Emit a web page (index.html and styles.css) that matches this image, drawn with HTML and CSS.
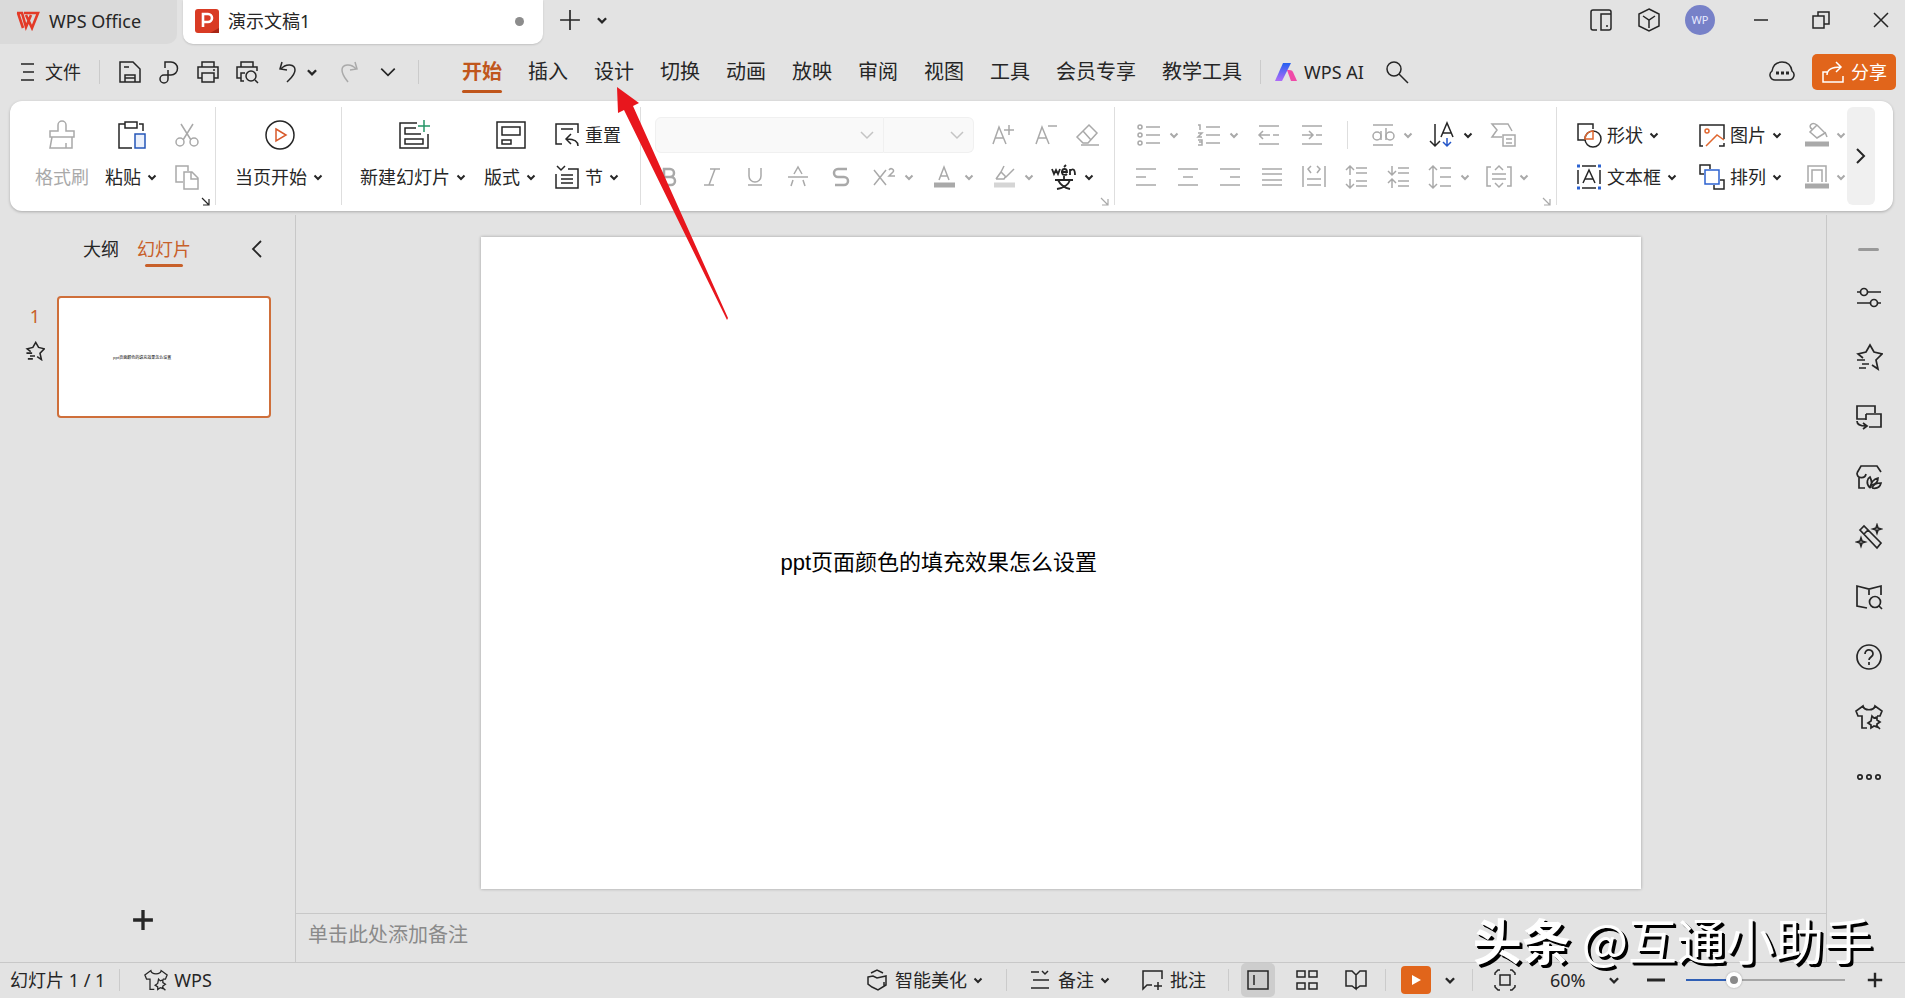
FILE: index.html
```html
<!DOCTYPE html>
<html lang="zh-CN">
<head>
	<meta charset="UTF-8">
	<title>演示文稿1 - WPS Office</title>
	<link rel="stylesheet" href="styles.css">
</head>
<body>
	<!-- 图标 -->
	<svg class="sprite" aria-hidden="true">
		<symbol id="down" viewBox="0 0 12 12"><path d="M2.5 4.5 6 8l3.500-3.500" stroke-width="2"/></symbol>
		<symbol id="down-thin" viewBox="0 0 16 16"><path d="M2 5l6 6 6-6"/></symbol>
		<symbol id="corner" viewBox="0 0 10 10"><path d="M1 1l7 7M8 2v6H2" stroke-width="1.2"/></symbol>
		<symbol id="plus" viewBox="0 0 20 20"><path d="M10 1v18M1 10h18"/></symbol>
		<symbol id="star" viewBox="0 0 28 28"><path d="M8 15l-5-4 8-2 4-7 4 7 8 2-6 6 2 9-6-4M2 17h8M7 21h7M4 25h7"/></symbol>
		<symbol id="shirt" viewBox="0 0 28 28"><path d="M12 25H7V13H3L1 8l7-5c1 5 11 5 12 0l7 5-2 5h-3M17 13l2 2 3-1v3l3 2-3 2v3l-3-1-3 2v-3l-3-2 3-2zM21 22l4 4"/></symbol>
	</svg>

	<header id="titlebar">
		<a class="home" href="#">
			<svg width="24" height="20" viewBox="0 0 24 20"><path d="M1 2h5l4 14 5-12M8 2h14l-6 15-6-13M2 2l5 15" stroke="#e33a27" stroke-width="2.6"/></svg>
			WPS Office
		</a>
		<div class="doc">
			<svg width="24" height="24" viewBox="0 0 24 24"><rect width="24" height="24" rx="3" fill="#d93b24" stroke="none"/><path d="M15 24l9-5v5z" fill="#a82515" stroke="none"/><path d="M8 18V5h5a4 4 0 0 1 0 8H8" stroke="#fff" stroke-width="2.6"/></svg>
			<span>演示文稿1</span>
			<i class="dot"></i>
		</div>
		<button class="new-tab" aria-label="新建"><svg width="22" height="22"><use href="#plus"/></svg></button>
		<button aria-label="标签列表"><svg width="14" height="14"><use href="#down"/></svg></button>
		<div class="window">
			<button aria-label="侧栏"><svg width="24" height="24" viewBox="0 0 24 24"><path d="M8 22H4a2 2 0 0 1-2-2V4a2 2 0 0 1 2-2h16a2 2 0 0 1 2 2v16a2 2 0 0 1-2 2h-8V6h10M17 18h2"/></svg></button>
			<button aria-label="应用"><svg width="24" height="24" viewBox="0 0 24 24"><path d="M12 1l10 5v12l-10 5-10-5V6zM6 8l6 4 6-4M12 12v8"/></svg></button>
			<span class="avatar">WP</span>
			<button class="wide" aria-label="最小化"><svg width="18" height="18" viewBox="0 0 18 18"><path d="M2 9h14"/></svg></button>
			<button class="wide" aria-label="还原"><svg width="20" height="20" viewBox="0 0 20 20"><path d="M2 6h11v12H2zM7 6V2h11v12h-5"/></svg></button>
			<button class="wide" aria-label="关闭"><svg width="18" height="18" viewBox="0 0 18 18"><path d="M2 2l14 14M16 2 2 16"/></svg></button>
		</div>
	</header>

	<nav id="menu">
		<button class="file"><svg width="15" height="20" viewBox="0 0 15 20"><path d="M1 2h13M3 10h11M1 18h13"/></svg>文件</button>
		<div class="quick">
			<button aria-label="保存"><svg width="24" height="24" viewBox="0 0 24 24"><path d="M2 2h13l7 7v13H2zM7 22v-7h10v7M7 18h10M6 7h5"/></svg></button>
			<button aria-label="输出为PDF"><svg width="24" height="24" viewBox="0 0 24 24"><path d="M8 8V2h6a6 6 0 0 1 0 13H7a4 4 0 1 0 4 4v-9"/></svg></button>
			<button aria-label="打印"><svg width="24" height="24" viewBox="0 0 24 24"><path d="M6 7V2h12v5M6 18H2V7h20v11h-4M6 13h12v9H6zM17 10h2"/></svg></button>
			<button aria-label="打印预览"><svg width="24" height="24" viewBox="0 0 24 24"><path d="M6 7V2h12v5M6 18H2V7h20v4M9 21H6v-8h4M20 20l3 3"/><circle cx="16" cy="16" r="5"/></svg></button>
			<button class="undo" aria-label="撤销"><svg width="20" height="22" viewBox="0 0 20 22"><path d="M4 1 2 8l7 1M3 8c5-6 14-5 14 1 0 5-4 8-8 12"/></svg><svg width="14" height="14"><use href="#down"/></svg></button>
			<button class="redo" aria-label="恢复" disabled><svg width="20" height="22" viewBox="0 0 20 22"><path d="M16 1l2 7-7 1M17 8C12 2 3 3 3 9c0 5 3 8 6 12"/></svg></button>
			<button aria-label="更多"><svg width="18" height="18"><use href="#down-thin"/></svg></button>
		</div>
		<div class="tabs">
			<a class="on" href="#">开始</a>
			<a href="#">插入</a>
			<a href="#">设计</a>
			<a href="#">切换</a>
			<a href="#">动画</a>
			<a href="#">放映</a>
			<a href="#">审阅</a>
			<a href="#">视图</a>
			<a href="#">工具</a>
			<a href="#">会员专享</a>
			<a href="#">教学工具</a>
		</div>
		<button class="ai">
			<svg width="24" height="20" viewBox="0 0 24 20"><defs><linearGradient id="g1" x2="0" y2="1"><stop stop-color="#2460f0"/><stop offset="1" stop-color="#b06cf8"/></linearGradient></defs><path d="M9 1h8L8 19H1z" fill="url(#g1)" stroke="none"/><path d="M13 8c3 0 5 0 6 2l4 9h-6z" fill="#f04aa8" stroke="none"/></svg>
			WPS AI
		</button>
		<button aria-label="搜索"><svg width="24" height="24" viewBox="0 0 24 24"><circle cx="9" cy="9" r="7"/><path d="M14 14l9 9"/></svg></button>
		<button class="cloud" aria-label="云"><svg width="26" height="24" viewBox="0 0 26 24"><path d="M6 20a5 5 0 0 1-3-9C4 5 8 2 13 2s9 3 10 9a5 5 0 0 1-3 9z"/><path d="M7 13h3M12 13h3M17 13h3" stroke-width="3"/></svg></button>
		<button class="share"><svg width="24" height="24" viewBox="0 0 24 24"><path d="M6 12H2v10h20v-6M6 15C6 9 11 7 20 7M15 2l5 5-5 5"/></svg>分享</button>
	</nav>

	<section id="ribbon">
		<div class="group clip">
			<button class="big off"><svg width="28" height="30" viewBox="0 0 28 30"><path d="M2 17v-6h8V5a4 4 0 0 1 8 0v6h8v6zM4 17 2 28h22V17M18 28v-5"/></svg><span>格式刷</span></button>
			<button class="big"><svg width="30" height="30" viewBox="0 0 30 30"><path d="M8 4H2v24h13M22 4h4v7M8 2h12v6H8z"/><path d="M18 14h10v14H18z" stroke="#2456b8" fill="#eaf0fc"/></svg><span>粘贴<svg class="dn"><use href="#down"/></svg></span></button>
			<div class="stack off">
				<button aria-label="剪切"><svg width="26" height="26" viewBox="0 0 26 26"><path d="M7 2l10 16M19 2 9 18"/><circle cx="6" cy="20" r="4"/><circle cx="20" cy="20" r="4"/></svg></button>
				<button aria-label="复制"><svg width="26" height="26" viewBox="0 0 26 26"><path d="M9 18H2V2h12v5M10 8h8l6 6v11H10zM17 8v7h7"/></svg></button>
			</div>
			<svg class="corner"><use href="#corner"/></svg>
		</div>
		<div class="group play">
			<button class="big"><svg width="32" height="32" viewBox="0 0 32 32"><circle cx="16" cy="16" r="14"/><path d="M12 10l10 6-10 6z" stroke="#d8592a"/></svg><span>当页开始<svg class="dn"><use href="#down"/></svg></span></button>
		</div>
		<div class="group slides">
			<button class="big"><svg width="32" height="32" viewBox="0 0 32 32"><path d="M19 4H2v25h28V15M18 9H7v6h16M7 20h18v5H7z"/><path d="M26 1v12M20 7h12" stroke="#259567"/></svg><span>新建幻灯片<svg class="dn"><use href="#down"/></svg></span></button>
			<button class="big"><svg width="32" height="32" viewBox="0 0 32 32"><path d="M2 3h28v26H2zM7 8h18v8H7zM7 21h9v4H7z"/></svg><span>版式<svg class="dn"><use href="#down"/></svg></span></button>
			<div class="stack">
				<button class="item"><svg width="26" height="26" viewBox="0 0 26 26"><path d="M8 22H2V2h22v9M7 7h12M24 24c0-5-5-7-11-7M17 12l-5 5 5 5"/></svg>重置</button>
				<button class="item"><svg width="26" height="26" viewBox="0 0 26 26"><path d="M14 5h10v19H2V10M3 2l4 4 4-4M7 11h12M7 15h12M7 19h12"/></svg>节<svg class="dn"><use href="#down"/></svg></button>
			</div>
		</div>
		<div class="group font">
			<div class="row off">
				<div class="combos">
					<label class="combo name"><select aria-label="字体" disabled><option></option></select><svg width="16" height="16"><use href="#down-thin"/></svg></label>
					<label class="combo size"><select aria-label="字号" disabled><option></option></select><svg width="16" height="16"><use href="#down-thin"/></svg></label>
				</div>
				<button aria-label="增大字号"><svg width="28" height="28" viewBox="0 0 28 28"><path d="M4 23l6-17 7 17M6 17h9M20 4v10M15 9h10"/></svg></button>
				<button aria-label="减小字号"><svg width="28" height="28" viewBox="0 0 28 28"><path d="M4 23l6-17 7 17M6 17h9M16 5h9"/></svg></button>
				<button aria-label="清除格式"><svg width="28" height="28" viewBox="0 0 28 28"><path d="M14 4l8 8-9 10H8l-6-6zM8 10l8 9M6 24h18"/></svg></button>
			</div>
			<div class="row off">
				<button aria-label="加粗"><svg width="28" height="28" viewBox="0 0 28 28"><path d="M9 6h6a4 4 0 0 1 0 8H9zM9 14h7a4 4 0 0 1 0 8H9z" stroke-width="2.5"/></svg></button>
				<button aria-label="倾斜"><svg width="28" height="28" viewBox="0 0 28 28"><path d="M12 6h10M6 22h10M17 6l-6 16"/></svg></button>
				<button aria-label="下划线"><svg width="28" height="28" viewBox="0 0 28 28"><path d="M8 5v8a6 6 0 0 0 12 0V5M7 22h14"/></svg></button>
				<button aria-label="删除线"><svg width="28" height="28" viewBox="0 0 28 28"><path d="M4 14h20M10 11l4-7 4 7M9 17l-2 6M19 17l2 6"/></svg></button>
				<button aria-label="阴影"><svg width="28" height="28" viewBox="0 0 28 28"><path d="M20 6h-9a4 4 0 0 0 0 8h6a4 4 0 0 1 0 8H8" stroke-width="2.5"/></svg></button>
				<button aria-label="上标"><svg width="28" height="28" viewBox="0 0 28 28"><path d="M4 7l12 15M16 7 4 22M19 7c2-3 6 0 4 2l-4 4h6"/></svg><svg class="dn"><use href="#down"/></svg></button>
				<button aria-label="字体颜色"><svg width="28" height="28" viewBox="0 0 28 28"><path d="M9 17l5-13 5 13M11 13h6"/><path d="M4 22h21" stroke-width="5"/></svg><svg class="dn"><use href="#down"/></svg></button>
				<button aria-label="突出显示"><svg width="28" height="28" viewBox="0 0 28 28"><path d="M6 16l5-7 5 5 8-8M11 9l3-6M6 16h8l2-3"/><path d="M4 22h21" stroke="#d5d5d5" stroke-width="5"/></svg><svg class="dn"><use href="#down"/></svg></button>
				<button class="wen" aria-label="拼音指南"><svg width="28" height="28" viewBox="0 0 28 28"><path d="M2 6l2 5 2-4 2 4 2-5M11 9h6c0-4-5-4-5 0s4 3 5 2M14 4l2-2M20 12V6M20 8c3-3 5-2 5 4M14 13v4M5 17h18M8 17c3 6 7 8 12 9M20 17c-2 6-7 8-13 9" stroke-width="1.8"/></svg><svg class="dn"><use href="#down"/></svg></button>
			</div>
			<svg class="corner off"><use href="#corner"/></svg>
		</div>
		<div class="group para">
			<div class="row off">
				<button aria-label="项目符号"><svg width="28" height="28" viewBox="0 0 28 28"><circle cx="5" cy="6" r="2"/><circle cx="5" cy="14" r="2"/><circle cx="5" cy="22" r="2"/><path d="M11 6h14M11 14h14M11 22h14"/></svg><svg class="dn"><use href="#down"/></svg></button>
				<button aria-label="编号"><svg width="28" height="28" viewBox="0 0 28 28"><path d="M11 6h14M11 14h14M11 22h14M3 4h2v5M3 12h4l-4 4h4M3 19h4v5H3M4 21h3"/></svg><svg class="dn"><use href="#down"/></svg></button>
				<button aria-label="减少缩进"><svg width="28" height="28" viewBox="0 0 28 28"><path d="M4 5h20M4 23h20M4 14h11M8 10l-4 4 4 4M18 14h6"/></svg></button>
				<button aria-label="增加缩进"><svg width="28" height="28" viewBox="0 0 28 28"><path d="M4 5h20M4 23h20M4 14h11M11 10l4 4-4 4M18 14h6"/></svg></button>
				<i class="line"></i>
				<button aria-label="文字方向"><svg width="28" height="28" viewBox="0 0 28 28"><path d="M4 4h20M4 24h20M12 10v9"/><circle cx="8" cy="15" r="4"/><path d="M17 7v12"/><circle cx="21" cy="15" r="4"/></svg><svg class="dn"><use href="#down"/></svg></button>
				<button class="on" aria-label="排序"><svg width="28" height="28" viewBox="0 0 28 28"><path d="M6 3v22M1 20l5 5 5-5M12 16l6-14 6 14M14 12h8"/><path d="M18 17v8M14 21l4 4 4-4" stroke="#2456c8"/></svg><svg class="dn"><use href="#down"/></svg></button>
				<button aria-label="智能图形"><svg width="28" height="28" viewBox="0 0 28 28"><path d="M13 16H3l5-7-5-6h16l4 7M14 14h12v11H14zM17 18h6M17 22h6"/></svg></button>
			</div>
			<div class="row tight off">
				<button aria-label="左对齐"><svg width="28" height="28" viewBox="0 0 28 28"><path d="M4 6h20M4 14h10M4 22h20"/></svg></button>
				<button aria-label="居中"><svg width="28" height="28" viewBox="0 0 28 28"><path d="M4 6h20M9 14h10M4 22h20"/></svg></button>
				<button aria-label="右对齐"><svg width="28" height="28" viewBox="0 0 28 28"><path d="M4 6h20M14 14h10M4 22h20"/></svg></button>
				<button aria-label="两端对齐"><svg width="28" height="28" viewBox="0 0 28 28"><path d="M4 6h20M4 11h20M4 17h20M4 22h20"/></svg></button>
				<button aria-label="分散对齐"><svg width="28" height="28" viewBox="0 0 28 28"><path d="M3 3v21M25 3v21M11 3 8 6l3 4M17 3l3 3-3 4M7 16h14M7 22h14"/></svg></button>
				<button aria-label="增加段距"><svg width="28" height="28" viewBox="0 0 28 28"><path d="M8 4v8M4 7l4-4 4 4M8 16v9M4 21l4 4 4-4M14 5h11M14 10h11M14 18h11M14 23h11"/></svg></button>
				<button aria-label="减少段距"><svg width="28" height="28" viewBox="0 0 28 28"><path d="M8 3v9M4 8l4 4 4-4M8 16v9M4 20l4-4 4 4M14 5h11M14 10h11M14 18h11M14 23h11"/></svg></button>
				<button aria-label="行距"><svg width="28" height="28" viewBox="0 0 28 28"><path d="M7 3v22M3 7l4-4 4 4M3 21l4 4 4-4M14 5h11M14 14h11M14 23h11"/></svg><svg class="dn"><use href="#down"/></svg></button>
				<button aria-label="对齐文本"><svg width="28" height="28" viewBox="0 0 28 28"><path d="M6 4H2v19h4M22 4h4v19h-4M10 7l4-4 4 4M7 11h14M7 16h14M10 20l4 4 4-4"/></svg><svg class="dn"><use href="#down"/></svg></button>
			</div>
			<svg class="corner off"><use href="#corner"/></svg>
		</div>
		<div class="group draw">
			<div class="stack">
				<button class="item"><svg width="26" height="26" viewBox="0 0 26 26"><path d="M9 18H2V2h15v5" /><circle cx="17" cy="17" r="8"/><path d="M17 9v8H9a8 8 0 0 1 8-8z" stroke="#e0672f"/></svg>形状<svg class="dn"><use href="#down"/></svg></button>
				<button class="item"><svg width="26" height="26" viewBox="0 0 26 26"><path d="M6 2h14M6 24h14M2 6v14M24 6v14M7 19l6-13 6 13M9 15h8"/><path d="M1 2h3M22 2h3M1 24h3M22 24h3" stroke="#2c62d0" stroke-width="3"/></svg>文本框<svg class="dn"><use href="#down"/></svg></button>
			</div>
			<div class="stack">
				<button class="item"><svg width="26" height="26" viewBox="0 0 26 26"><path d="M4 24H1V3h24v14M25 21v3h-5"/><circle cx="8" cy="9" r="2" stroke="#e0672f"/><path d="M7 24l11-11 7 5" stroke="#e0672f"/></svg>图片<svg class="dn"><use href="#down"/></svg></button>
				<button class="item"><svg width="26" height="26" viewBox="0 0 26 26"><path d="M5 10H1V1h10v4M21 16h4v9H15v-4"/><path d="M6 6h14v14H6z" stroke="#2c62d0"/></svg>排列<svg class="dn"><use href="#down"/></svg></button>
			</div>
			<div class="stack off">
				<button class="item" aria-label="填充"><svg width="26" height="26" viewBox="0 0 26 26"><path d="M13 3 6 10l7 6 8-5-8-8c-6-4-9 2-5 4M21 10l2 5"/><path d="M1 22h24" stroke-width="5"/></svg><svg class="dn"><use href="#down"/></svg></button>
				<button class="item" aria-label="轮廓"><svg width="26" height="26" viewBox="0 0 26 26"><path d="M4 18V2h18v16M8 18V6h10v12"/><path d="M1 22h24" stroke-width="5"/></svg><svg class="dn"><use href="#down"/></svg></button>
			</div>
		</div>
		<button class="scroll" aria-label="向右滚动"><svg width="10" height="18" viewBox="0 0 10 18"><path d="M1 2l7 7-7 7" stroke-width="2"/></svg></button>
	</section>

	<main id="work">
		<aside id="pane">
			<div class="pane-tabs">
				<a href="#">大纲</a>
				<a class="on" href="#">幻灯片</a>
				<button aria-label="收起"><svg width="12" height="18" viewBox="0 0 12 18"><path d="M10 1 2 9l8 8" stroke-width="1.8"/></svg></button>
			</div>
			<div class="thumb-row">
				<div class="mark">
					<b>1</b>
					<svg width="20" height="20"><use href="#star" stroke-width="2.2"/></svg>
				</div>
				<div class="thumb"><span>ppt页面颜色的填充效果怎么设置</span></div>
			</div>
			<button class="add" aria-label="新建幻灯片"><svg width="22" height="22"><use href="#plus"/></svg></button>
		</aside>
		<section id="editor">
			<div class="stage">
				<div class="slide"><p>ppt页面颜色的填充效果怎么设置</p></div>
			</div>
			<input class="notes" type="text" aria-label="备注" placeholder="单击此处添加备注">
		</section>
		<aside id="rail">
			<i class="grip"></i>
			<button aria-label="对象属性"><svg viewBox="0 0 28 28"><path d="M2 9h4M12 9h14M2 20h14M22 20h4"/><circle cx="9" cy="9" r="3.5"/><circle cx="19" cy="20" r="3.5"/></svg></button>
			<button aria-label="动画"><svg><use href="#star"/></svg></button>
			<button aria-label="切换"><svg viewBox="0 0 28 28"><path d="M11 16H2V3h18v7M11 11h15v13H14M11 11v6M2 18c0 4 4 5 9 5M8 20l4 3-4 3"/></svg></button>
			<button aria-label="模板"><svg viewBox="0 0 28 28"><path d="M4 14v11h6M2 10c0 6 8 6 9 1M2 10l4-7h16l4 6M15 25c-5-5-2-10 0-11 2 4 2 8 0 11 1-6 4-9 8-10 0 4-2 6-6 7M17 25c2-5 6-5 9-5-1 4-4 6-9 5"/></svg></button>
			<button aria-label="美化"><svg viewBox="0 0 28 28"><path d="M5 7l4-4 17 17-4 5zM9 11l4-4M22 2l1 3 3 1-3 1-1 3-1-3-3-1 3-1zM6 15l1 3 3 1-3 1-1 3-1-3-3-1 3-1z"/></svg></button>
			<button aria-label="查阅"><svg viewBox="0 0 28 28"><path d="M12 25 2 23V3l12 3 12-3v9M14 6v6M24 23l3 3"/><circle cx="20" cy="19" r="5.5"/></svg></button>
			<button aria-label="帮助"><svg viewBox="0 0 28 28"><circle cx="14" cy="14" r="12"/><path d="M10 11c0-6 8-5 8 0 0 3-4 3-4 6M14 19v3"/></svg></button>
			<button aria-label="皮肤"><svg><use href="#shirt"/></svg></button>
			<button aria-label="更多"><svg viewBox="0 0 28 28"><circle cx="5" cy="14" r="2.2"/><circle cx="14" cy="14" r="2.2"/><circle cx="23" cy="14" r="2.2"/></svg></button>
		</aside>
	</main>

	<footer id="status">
		<span class="count">幻灯片 1 / 1</span>
		<button class="skin"><svg width="24" height="24"><use href="#shirt"/></svg>WPS</button>
		<div class="part first">
			<button><svg width="22" height="22" viewBox="0 0 22 22"><path d="M5 4l6-3 6 3M2 8l5-1 4 2 9-2v9l-8 5-6-3-4-3zM18 13v4"/></svg>智能美化<svg class="dn"><use href="#down"/></svg></button>
		</div>
		<div class="part">
			<button><svg width="22" height="22" viewBox="0 0 22 22"><path d="M2 3h8M13 2l3 3 3-3M4 11h16M2 19h18"/></svg>备注<svg class="dn"><use href="#down"/></svg></button>
			<button class="comment"><svg width="22" height="22" viewBox="0 0 22 22"><path d="M21 10V2H2v18l4-4h5M17 13v8M13 17h8"/></svg>批注</button>
		</div>
		<div class="part views">
			<button class="on" aria-label="普通视图"><svg width="22" height="22" viewBox="0 0 22 22"><path d="M1 2h20v18H1zM7 6v10"/></svg></button>
			<button aria-label="浏览视图"><svg width="22" height="22" viewBox="0 0 22 22"><path d="M1 2h8v6H1zM13 2h8v6h-8zM1 14h8v6H1zM13 14h8v6h-8z"/></svg></button>
			<button aria-label="阅读视图"><svg width="22" height="22" viewBox="0 0 22 22"><path d="M11 6v14l-4-3H1V2h6l4 4 4-4h6v15h-6l-4 3"/></svg></button>
		</div>
		<div class="part show">
			<button class="go" aria-label="放映"><svg width="12" height="12" viewBox="0 0 12 12"><path d="M2 1l9 5-9 5z" fill="#fff" stroke="none"/></svg></button>
			<button aria-label="放映选项"><svg width="14" height="14"><use href="#down"/></svg></button>
		</div>
		<div class="zoom">
			<button aria-label="适应窗口"><svg width="22" height="22" viewBox="0 0 22 22"><path d="M1 6V4l3-3h2M16 1h2l3 3v2M21 16v2l-3 3h-2M6 21H4l-3-3v-2M6 6h10v10H6z"/></svg></button>
			<label class="percent"><select aria-label="显示比例"><option>60%</option></select><svg width="14" height="14"><use href="#down"/></svg></label>
			<button class="bold" aria-label="缩小"><svg width="20" height="20" viewBox="0 0 20 20"><path d="M1 10h18"/></svg></button>
			<input type="range" aria-label="缩放" min="0" max="100" value="28">
			<button class="bold" aria-label="放大"><svg width="16" height="16"><use href="#plus"/></svg></button>
		</div>
	</footer>

	<svg class="arrow" width="114" height="236" viewBox="0 0 114 236"><path d="M2 0l22 16-6 3 95 212-1 2L9 23l-6 3z"/></svg>
	<div class="sign"><b>头条</b> @互通小助手</div>
</body>
</html>
```
FILE: styles.css
```css
* {
	box-sizing: border-box;
}
body {
	display: flex;
	flex-direction: column;
	height: 100vh;
	margin: 0;
	overflow: hidden;
	background: #e3e3e3;
	color: #262626;
	font: 18px/24px "Noto Sans", "Noto Sans CJK SC", sans-serif;
}
a {
	color: inherit;
	text-decoration: none;
}
button, select, input {
	margin: 0;
	padding: 0;
	border: 0;
	background: none;
	color: inherit;
	font: inherit;
}
button {
	display: flex;
	align-items: center;
	justify-content: center;
	flex-shrink: 0;
	white-space: nowrap;
}
select {
	appearance: none;
	opacity: 1;
}
svg {
	flex-shrink: 0;
	fill: none;
	stroke: currentColor;
	stroke-width: 1.5;
}
.sprite {
	position: absolute;
	width: 0;
	height: 0;
}
.dn {
	width: 12px;
	height: 12px;
	margin-left: 5px;
}

/* 标题栏 */
#titlebar {
	display: flex;
	align-items: center;
	flex-shrink: 0;
	height: 44px;
	padding-bottom: 4px;
}
.home {
	display: flex;
	align-items: center;
	gap: 9px;
	width: 177px;
	height: 44px;
	padding-left: 16px;
	padding-bottom: 2px;
	margin-bottom: -4px;
	border-radius: 0 0 10px 0;
	background: #dadada;
}
.doc {
	display: flex;
	align-items: center;
	gap: 9px;
	width: 360px;
	height: 44px;
	margin: 0 0 -4px 6px;
	padding: 0 19px 2px 12px;
	border-radius: 0 0 10px 10px;
	background: #fff;
	box-shadow: 0 1px 2px rgba(0,0,0,.15);
}
.dot {
	width: 9px;
	height: 9px;
	margin-left: auto;
	border-radius: 50%;
	background: #8c8c8c;
}
.new-tab {
	margin: 0 14px 0 16px;
}
.window {
	display: flex;
	align-items: center;
	gap: 24px;
	margin-left: auto;
	padding-right: 6px;
}
.avatar {
	width: 30px;
	height: 30px;
	margin: 0 4px 0 0;
	border-radius: 50%;
	background: #7781c8;
	color: #e8eaff;
	font-size: 11px;
	line-height: 30px;
	text-align: center;
}
.window .wide {
	width: 36px;
}

/* 菜单栏 */
#menu {
	display: flex;
	align-items: center;
	flex-shrink: 0;
	height: 57px;
	padding: 0 9px 2px 20px;
}
.file {
	gap: 10px;
	padding-right: 18px;
	border-right: 1px solid #cbcbcb;
}
.quick {
	display: flex;
	align-items: center;
	gap: 15px;
	padding: 0 21px 0 18px;
	border-right: 1px solid #cbcbcb;
}
.quick .undo {
	gap: 7px;
	margin-left: 4px;
}
.quick .redo {
	margin: 0 5px;
	color: #aaa;
}
.tabs {
	display: flex;
	gap: 26px;
	padding: 0 18px 0 43px;
	border-right: 1px solid #cbcbcb;
	font-size: 20px;
	white-space: nowrap;
}
.tabs a {
	position: relative;
}
.tabs .on {
	color: #c0561c;
	font-weight: bold;
}
.tabs .on::after {
	content: "";
	position: absolute;
	left: 0;
	right: 0;
	bottom: -9px;
	height: 3px;
	border-radius: 2px;
	background: #c0561c;
}
.ai {
	gap: 6px;
	padding: 0 21px 0 13px;
}
.cloud {
	margin-left: auto;
	margin-right: 17px;
}
.share {
	gap: 6px;
	width: 84px;
	height: 36px;
	border-radius: 5px;
	background: #e1651b;
	color: #fff;
}

/* 功能区 */
#ribbon {
	display: flex;
	flex-shrink: 0;
	height: 110px;
	margin: 0 12px 4px 10px;
	padding-right: 18px;
	border-radius: 12px;
	background: #fff;
	box-shadow: 0 1px 3px rgba(0,0,0,.25);
}
.group {
	position: relative;
	display: flex;
	flex-shrink: 0;
	height: 98px;
	margin-top: 6px;
	padding-top: 11px;
	border-right: 1px solid #dedede;
}
.off {
	color: #a9a9a9;
}
.big {
	flex-direction: column;
	justify-content: flex-start;
	gap: 8px;
	height: 76px;
}
.big > svg {
	height: 34px;
}
.big span {
	display: flex;
	align-items: center;
	height: 34px;
}
.big.off span {
	color: #a9a9a9;
}
.stack, .font, .para {
	display: flex;
	flex-direction: column;
	gap: 8px;
}
.stack button {
	height: 34px;
	justify-content: flex-start;
}
.item > svg:first-child {
	margin-right: 5px;
}
.stack.off .item > svg:first-child {
	margin-right: 0;
}
.clip {
	gap: 16px;
	padding-left: 25px;
	padding-right: 15px;
}
.play {
	padding-left: 19px;
	padding-right: 17px;
}
.slides {
	gap: 17px;
	padding-left: 18px;
	padding-right: 19px;
}
.font {
	width: 474px;
	padding-left: 14px;
}
.para {
	width: 442px;
	padding-left: 17px;
}
.row {
	display: flex;
	align-items: center;
	gap: 15px;
	height: 34px;
}
.para .row {
	padding-left: 3px;
}
.para .tight {
	gap: 14px;
	padding-left: 0;
}
.line {
	width: 1px;
	height: 28px;
	margin: 0 6px;
	background: #dedede;
}
.row .on, .row .wen {
	color: #262626;
}
.combos {
	display: flex;
}
.combo {
	display: flex;
	align-items: center;
	height: 36px;
	padding-right: 8px;
	border: 1px solid #f0f0f0;
	background: #f9f9f9;
	color: #c4c4c4;
}
.combo select {
	flex: 1;
	height: 34px;
}
.name {
	width: 229px;
	border-radius: 6px 0 0 6px;
}
.size {
	width: 90px;
	border-left: 0;
	border-radius: 0 6px 6px 0;
}
.corner {
	position: absolute;
	right: 4px;
	bottom: -2px;
	width: 10px;
	height: 10px;
}
.draw {
	flex: 1 1 0;
	gap: 21px;
	padding-left: 19px;
	border: 0;
	overflow: hidden;
}
.scroll {
	width: 28px;
	height: 98px;
	margin-top: 6px;
	border-radius: 6px;
	background: #f0f0f0;
}

/* 工作区 */
#work {
	display: flex;
	flex: 1;
	min-height: 0;
}
#pane {
	display: flex;
	flex-direction: column;
	width: 296px;
	border-right: 1px solid #c8c8c8;
}
.pane-tabs {
	display: flex;
	gap: 18px;
	padding: 22px 32px 0 83px;
}
.pane-tabs .on {
	position: relative;
	color: #c8602a;
}
.pane-tabs .on::after {
	content: "";
	position: absolute;
	left: 8px;
	right: 8px;
	bottom: -6px;
	height: 3px;
	border-radius: 2px;
	background: #c8602a;
}
.pane-tabs button {
	margin-left: auto;
}
.thumb-row {
	display: flex;
	gap: 12px;
	padding: 35px 24px 0 25px;
}
.mark {
	display: flex;
	flex-direction: column;
	align-items: center;
	gap: 13px;
	width: 20px;
	padding-top: 8px;
}
.mark b {
	color: #c8602a;
	font-weight: normal;
}
.thumb {
	flex: 1;
	height: 122px;
	padding: 57px 0 0 54px;
	border: 2px solid #cf6f3a;
	border-radius: 4px;
	background: #fff;
	color: #000;
	font-size: 4px;
	line-height: 6px;
}
.add {
	margin: auto auto 31px 132px;
}
.add svg, .bold svg {
	stroke-width: 3;
}
#editor {
	display: flex;
	flex: 1;
	flex-direction: column;
	min-width: 0;
}
.stage {
	display: flex;
	justify-content: center;
	flex: 1;
	min-height: 0;
	padding: 22px 0 24px;
}
.slide {
	display: flex;
	align-items: center;
	height: 100%;
	aspect-ratio: 16 / 9;
	padding-left: 299px;
	background: #fff;
	box-shadow: 0 0 3px rgba(0,0,0,.3);
	color: #000;
	font: 22px/30px "Liberation Sans", "Noto Sans CJK SC", sans-serif;
}
.slide p {
	margin: 0;
}
.notes {
	height: 49px;
	padding: 0 12px 8px;
	border-top: 1px solid #c8c8c8;
	font-size: 20px;
}
.notes::placeholder {
	color: #8a8a8a;
	opacity: 1;
}
#rail {
	display: flex;
	flex-direction: column;
	align-items: center;
	gap: 32px;
	width: 79px;
	padding: 33px 0 0 5px;
	border-left: 1px solid #c8c8c8;
}
#rail svg {
	width: 28px;
	height: 28px;
	stroke-width: 1.7;
}
.grip {
	width: 21px;
	height: 3px;
	border-radius: 2px;
	background: #999;
}

/* 状态栏 */
#status {
	display: flex;
	align-items: center;
	flex-shrink: 0;
	height: 36px;
	padding: 0 22px 2px 10px;
	border-top: 1px solid #c8c8c8;
	white-space: nowrap;
}
.count {
	height: 22px;
	padding-right: 14px;
	border-right: 1px solid #cbcbcb;
	line-height: 22px;
}
.skin {
	gap: 6px;
	margin-left: 24px;
}
.part {
	display: flex;
	align-items: center;
	height: 22px;
	padding: 0 22px;
	border-right: 1px solid #cbcbcb;
}
.part.first {
	margin-left: auto;
}
.part button > svg:first-child {
	margin-right: 7px;
}
.comment {
	margin-left: 30px;
}
.part.views {
	gap: 15px;
	padding: 0 12px;
}
.views button {
	width: 34px;
	height: 34px;
	border-radius: 5px;
}
.part.views button > svg, .part.show button > svg {
	margin: 0;
}
.views .on {
	background: #cdcdcd;
}
.part.show {
	gap: 12px;
	padding: 0 15px;
}
.show .go {
	width: 30px;
	height: 28px;
	border-radius: 4px;
	background: #e1651b;
}
.zoom {
	display: flex;
	align-items: center;
	gap: 20px;
	padding-left: 21px;
}
.percent {
	display: flex;
	align-items: center;
	gap: 21px;
	margin-left: 14px;
	margin-right: 5px;
}
.zoom input {
	appearance: none;
	width: 159px;
	height: 16px;
	margin-right: 2px;
	background: linear-gradient(90deg, #2f5fb5 30%, #a5a5a5 30%) center / 100% 2px no-repeat;
}
.zoom input::-webkit-slider-thumb {
	appearance: none;
	width: 16px;
	height: 16px;
	border: 4px solid #fff;
	border-radius: 50%;
	background: #8a8a8a;
	box-shadow: 0 0 2px rgba(0,0,0,.3);
}

/* 指向“设计”的箭头和右下角署名 */
.arrow {
	position: absolute;
	left: 615px;
	top: 87px;
	fill: #e8161d;
	stroke: none;
	pointer-events: none;
}
.sign {
	position: absolute;
	right: 32px;
	bottom: 29px;
	color: #fff;
	font: 49px/60px "Noto Sans CJK SC", sans-serif;
	text-shadow: 2px 2px 0 #000, 3px 3px 0 #000;
	pointer-events: none;
}
```
